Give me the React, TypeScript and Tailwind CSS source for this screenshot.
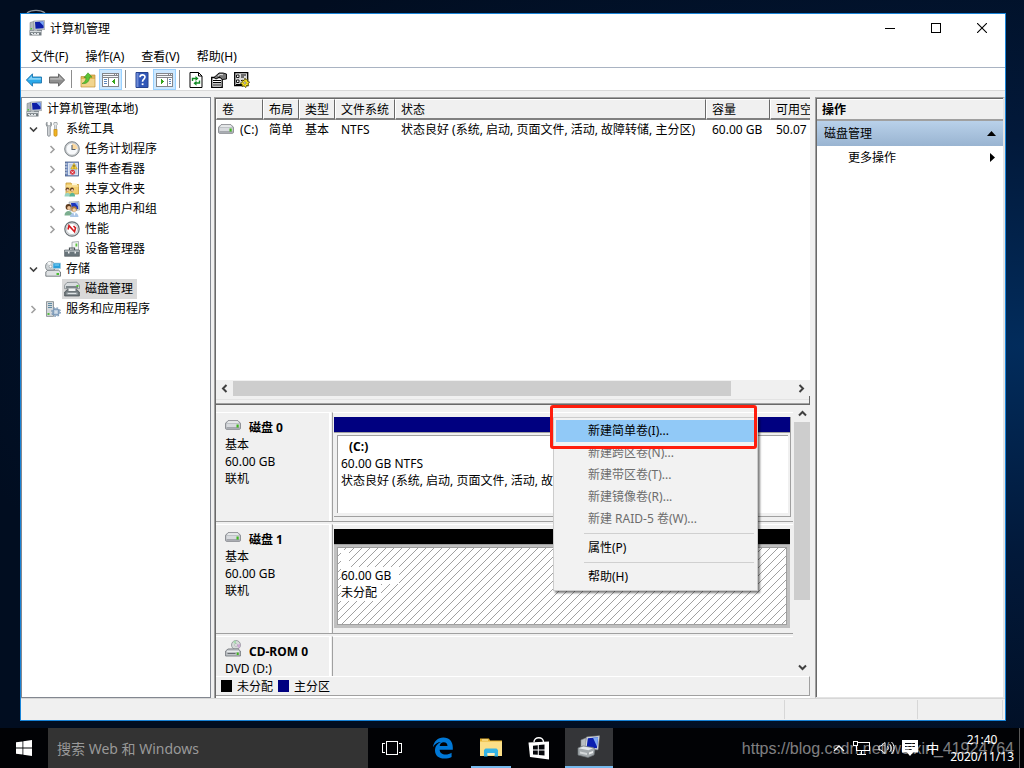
import React from "react";

const Svg = ({
  children,
  size = 16,
  className = "",
}: {
  children: React.ReactNode;
  size?: number;
  className?: string;
}) => (
  <svg
    width={size}
    height={size}
    viewBox="0 0 16 16"
    className={`shrink-0 ${className}`}
    aria-hidden="true"
  >
    {children}
  </svg>
);

const ComputerIcon = ({ size = 16 }: { size?: number }) => (
  <Svg size={size}>
    <path d="M1 2.500 4.500 1.500V11H1z" fill="#b4babe" stroke="#6f777c" strokeWidth=".5" />
    <path d="M4.500 1 15.500.5 15.800 9.500 5.500 10z" fill="#d0d4d8" stroke="#7d868c" strokeWidth=".5" />
    <path d="M6 2l8.400-.4.300 6.600-8.200.5z" fill="#0c1ea8" />
    <path d="M10.500 1.800l3.900-.2.200 4.400z" fill="#7aa9f8" />
    <path d="M8 9.800h5V11H8z" fill="#8c9499" />
    <path d="M.5 10.500h12v5H.5z" fill="#727b80" />
    <path d="M1 10.900h11v1.300H1z" fill="#d8dddf" />
    <path d="M2 13h2v1H2zm3 0h2v1H5zm3 0h2v1H8zM3 14.300h7v.7H3z" fill="#e6eaec" />
    <path d="M1.600 8h1.400v1.500H1.600z" fill="#52c836" />
  </Svg>
);

const ManagementIcon = () => (
  <svg width="24" height="24" viewBox="0 0 24 24" className="shrink-0" aria-hidden="true">
    <path d="m4 5 5-2v11l-5 2z" fill="#b9bec2" stroke="#878d91" strokeWidth=".6" />
    <path d="m9.500 2 13-1.200-1.500 14-13-1z" fill="#dde1e4" stroke="#8b9196" strokeWidth=".6" />
    <path d="m10.800 3.200 10.300-1-1.200 11-10.300-.8z" fill="#0a1fb0" />
    <path d="m16 2.700 5.100-.5-1 9.500z" fill="#7da8f2" />
    <path d="m1 13 5-2 10 1.500 2 1.500-1 6-6 2.500L1 20z" fill="#a3a9ad" stroke="#6e757a" strokeWidth=".7" />
    <path d="m1.500 13.200 5-1.600 9.500 1.600-4.500 2z" fill="#e5e8ea" />
    <path d="m3 16.500 7 1.500v2l-7-1.500z" fill="#d3d7da" />
    <path d="m12 17.500 4-1.500v2l-4 1.500z" fill="#eceeef" />
  </svg>
);

const ToolsIcon = () => (
  <Svg>
    <path
      d="M2 1.2C.8 2.6 1 5 2.6 6v8.2c0 1.4 2.6 1.4 2.6 0V6C6.8 5 7 2.6 5.800 1.200V4L4.500 4.800H3.300L2 4z"
      fill="#d9dcde"
      stroke="#777f84"
      strokeWidth=".8"
    />
    <path d="M9 1.500h3l.3 2-.9 1v4H9.600v-4l-.9-1z" fill="#e8eaeb" stroke="#8d9498" strokeWidth=".7" />
    <path d="M8.900 8.500h3.200v5.500c0 1.800-3.200 1.800-3.200 0z" fill="#f0b323" stroke="#b77d0b" strokeWidth=".6" />
  </Svg>
);

const ClockIcon = () => (
  <Svg>
    <circle cx="8" cy="8" r="7.300" fill="#c9ccce" stroke="#7d8489" strokeWidth="1" />
    <circle cx="8" cy="8" r="5.600" fill="#f7f9fb" />
    <path d="M8 2.400A5.600 5.600 0 0 1 13.600 8H8z" fill="#fbd9a0" />
    <path d="M8 4v4.500h3.500" fill="none" stroke="#59636d" strokeWidth="1.100" />
  </Svg>
);

const EventIcon = () => (
  <Svg>
    <rect x="1.500" y="1" width="13" height="14" fill="#6f89bd" stroke="#4c618c" strokeWidth=".8" />
    <rect x="4" y="1.800" width="10" height="12.400" fill="#dfe7f4" />
    <path d="M5 4h8M5 6h8M5 8h8M5 10h8M5 12h8" stroke="#8da5d0" strokeWidth=".7" />
    <path d="M.8 3h2.500M.8 6h2.500M.8 9h2.500M.8 12h2.500" stroke="#e3e6ea" strokeWidth="1" />
    <path d="M10 2.200 13.200 8H6.800z" fill="#ffd93b" stroke="#b89311" strokeWidth=".6" />
    <path d="M10 4v2.200M10 6.700v.7" stroke="#222" strokeWidth=".8" />
    <circle cx="8.500" cy="11.300" r="2.500" fill="#d8303a" />
    <path d="m7.500 10.300 2 2m0-2-2 2" stroke="#fff" strokeWidth=".8" />
  </Svg>
);

const SharedIcon = () => (
  <Svg>
    <path d="M2 4V2h5l1 1.500h6.500V13H2z" fill="#f3cf6f" stroke="#c59a35" strokeWidth=".8" />
    <path d="M8 2.200h5v2H8z" fill="#fff6d5" />
    <path d="M2 5h12.500" stroke="#fbe8b0" strokeWidth="1" />
    <circle cx="3.500" cy="8.500" r="1.900" fill="#6b4426" />
    <circle cx="8" cy="8.500" r="1.900" fill="#5a3820" />
    <circle cx="3.700" cy="9.200" r="1.200" fill="#f0c8a0" />
    <circle cx="8.300" cy="9.200" r="1.200" fill="#f0c8a0" />
    <path d="M.5 15.500c0-5 6-5 6 0z" fill="#9ad3c0" />
    <path d="M5.500 15.500c0-5 5.600-5 5.600 0z" fill="#5cb496" />
  </Svg>
);

const UsersIcon = () => (
  <Svg>
    <path d="M5 1 15 .5 15.500 9 6 10z" fill="#d6dade" stroke="#7d868c" strokeWidth=".5" />
    <path d="m7 2 7-.3.300 6.200L8 8.400z" fill="#1c36be" />
    <path d="m11 1.800 3-.1.200 4z" fill="#7ba6f5" />
    <circle cx="4.500" cy="6" r="2.900" fill="#5b3a1d" />
    <circle cx="5" cy="7" r="1.900" fill="#efc49a" />
    <path d="M.5 14.500c0-6 8-6 8 0z" fill="#7cae8f" />
    <circle cx="10" cy="8" r="2.800" fill="#ad7b3a" />
    <circle cx="10.200" cy="9" r="1.800" fill="#f7d1aa" />
    <path d="M6 16c0-6 8.500-6 8.500 0z" fill="#a9c5e6" />
    <path d="m9.500 12 1 3 1-3z" fill="#fff" />
  </Svg>
);

const PerformanceIcon = () => (
  <Svg>
    <circle cx="8" cy="8" r="7.200" fill="#e9ebec" stroke="#666d72" strokeWidth="1.200" />
    <circle cx="8" cy="8" r="5.600" fill="#fff" stroke="#a2a8ac" strokeWidth=".6" />
    <path d="M4 8.500 5 4.700l5.500 6 1-3.700-2-2" fill="none" stroke="#d2191e" strokeWidth="1.600" />
  </Svg>
);

const DeviceIcon = () => (
  <Svg>
    <path d="M8 1.200 14.500.5V9H8z" fill="#f3f4f5" stroke="#8b9195" strokeWidth=".7" />
    <path d="M11.500 2.500h1.800v3h-1.800z" fill="#5fc63f" />
    <path d="M5.500 9V7h5v2" fill="none" stroke="#4e565a" strokeWidth="1.200" />
    <path d="M.6 9h14.800v6.300H.6z" fill="#69757b" stroke="#4b5357" strokeWidth=".6" />
    <path d="M1 9.400h14v1.400H1z" fill="#b4bcc0" />
    <path d="M4 10.500h1.500v2H4zm6.500 0H12v2h-1.500z" fill="#edf0f1" />
  </Svg>
);

const StorageIcon = () => (
  <Svg>
    <circle cx="5.500" cy="5.500" r="5" fill="#cdd2d5" stroke="#747c80" strokeWidth=".8" />
    <path d="M5.500 5.500 2 2A5 5 0 0 1 6 .6z" fill="#f5f7f8" />
    <circle cx="5.500" cy="5.500" r="1.400" fill="#fff" stroke="#858c90" strokeWidth=".6" />
    <path d="M8 2h7.700v5.500H8z" fill="#2ba0db" stroke="#bcd3df" strokeWidth=".7" />
    <path d="M9.500 3.500h4.500v1H9.500z" fill="#8ad6f5" />
    <path d="m2.500 9.300 11-.2 2 1.900v4.200H.8V11z" fill="#dfe2e4" stroke="#5d6469" strokeWidth=".8" />
    <path d="M11.500 12H14v2h-2.500z" fill="#49be33" />
  </Svg>
);

const DiskManagementIcon = () => (
  <Svg>
    <path d="m3 1.500 10-.3 2.500 3v3.500H.6V4.200z" fill="#d8dcde" stroke="#737a7e" strokeWidth=".7" />
    <path d="M2 5h12v2.500H2z" fill="#7d8589" />
    <path d="M12.500 4h2v1.800h-2z" fill="#50c434" />
    <path d="m3.500 8.500h9l2.900 2.500v4H.6v-4z" fill="#6e767a" stroke="#484f53" strokeWidth=".7" />
    <path d="M4.500 7.500h7v2.500h-7z" fill="#eef0f1" />
    <path d="M2.500 11.500h11v2h-11z" fill="#a9b0b4" />
    <path d="M4 12h8v1H4z" fill="#dfe3e5" />
  </Svg>
);

const ServicesIcon = () => (
  <Svg>
    <path d="M1.500.6h7V15.400h-7z" fill="#d3d7da" stroke="#7c8488" strokeWidth=".8" />
    <path d="M3 2.500h4M3 4.500h4M3 6.500h4" stroke="#5f8ba4" strokeWidth="1" />
    <path d="M2.500 12h2v2h-2z" fill="#59bd43" />
    <circle cx="11" cy="11" r="3" fill="#d6e3ef" stroke="#7e9bb9" strokeWidth="1.600" />
    <circle cx="11" cy="11" r="4.300" fill="none" stroke="#7e9bb9" strokeWidth="1.200" strokeDasharray="1.700 1.678" />
    <circle cx="11" cy="11" r="1.300" fill="#fff" stroke="#7694b3" strokeWidth=".5" />
  </Svg>
);

const DriveIcon = () => (
  <svg width="16" height="10" viewBox="0 0 16 10" className="shrink-0" aria-hidden="true">
    <path d="M3 .7h10l2.400 2.500v5.200c0 .5-.4.900-.9.900h-13c-.5 0-.9-.4-.9-.9V3.200z" fill="#bfc3c7" stroke="#7d7f86" strokeWidth=".9" />
    <path d="M3.300 1.300h9.400L14 2.800H2z" fill="#f3f4f5" />
    <path d="M1.500 4h13v4h-13z" fill="#d8dade" />
    <path d="M1.500 7h13v1.600h-13z" fill="#a4a7ad" />
    <path d="M11.500 4.500h2.200v3h-2.200z" fill="#3fb51f" />
  </svg>
);

const CdDriveIcon = () => (
  <svg width="16" height="17" viewBox="0 0 16 17" className="shrink-0" aria-hidden="true">
    <circle cx="11" cy="5" r="4.500" fill="#d5dbd8" stroke="#8a8f93" strokeWidth=".8" />
    <path d="M11 5 8 1.800A4.500 4.500 0 0 1 11 .6z" fill="#a7d9ae" />
    <path d="m11 5 4.300-1A4.500 4.500 0 0 1 14 8.300z" fill="#cda8d2" />
    <circle cx="11" cy="5" r="1.300" fill="#fff" stroke="#8a8f93" strokeWidth=".5" />
    <path d="m3 9 10-.2 2.400 2.200v5H.6v-5z" fill="#bfc3c7" stroke="#777b80" strokeWidth=".9" />
    <path d="M2 11.300h12" stroke="#f3f4f5" strokeWidth="1" />
    <path d="M2.500 13.500h8" stroke="#666a6f" strokeWidth="1" />
    <path d="M11.700 12.500h2v2.500h-2z" fill="#3fb51f" />
  </svg>
);

const ArrowIcon = ({ forward = false }: { forward?: boolean }) => (
  <Svg>
    {forward ? (
      <>
        <path d="M15.600 8 9.500 1.800V5H.5v6h9v3.200z" fill="#8f8f8f" stroke="#5f5f5f" strokeWidth=".9" />
        <path d="m14 7.700-4-4v2.200H1.200v1.800z" fill="#b4b4b4" />
      </>
    ) : (
      <>
        <path d="M.4 8l6.100-6.200V5h9v6h-9v3.200z" fill="#2ba9ea" stroke="#1f74ad" strokeWidth=".9" />
        <path d="m2 7.700 4-4v2.200h8.800v1.800z" fill="#86d3f8" />
      </>
    )}
  </Svg>
);

const FolderUpIcon = () => (
  <Svg>
    <path d="M1 4.500h6L8 3h7V15H1z" fill="#e0b557" stroke="#bd913a" strokeWidth=".7" />
    <path d="M1.500 7h13v7.500h-13z" fill="#f2d58e" />
    <path
      d="M2 11.500C4.500 10.500 6 8.500 6 5.500H4L8 .8l4 4.400H9.500c0 4-2.500 7-7.500 6.300z"
      fill="#5cc437"
      stroke="#2f8617"
      strokeWidth=".5"
    />
  </Svg>
);

const PaneIcon = ({ flipped = false }: { flipped?: boolean }) => (
  <svg width="17" height="14" viewBox="0 0 17 14" shapeRendering="crispEdges" aria-hidden="true">
    <path d="M0 0h17v14H0z" fill="#84868a" />
    <path d="M1 1h11v1H1zM13 1h1v1h-1zM15 1h1v1h-1zM1 3h15v1H1z" fill="#f5f7fa" />
    <path d="M1 5h15v8H1z" fill="#fff" />
    <path d={flipped ? "M11 4h1v9h-1z" : "M6 4h1v9H6z"} fill="#84868a" />
    <path d={flipped ? "M13 6h2v1h-2zM13 8h2v1h-2zM13 10h2v1h-2z" : "M2 6h3v1H2zM2 8h3v1H2zM2 10h3v1H2z"} fill="#5b87bd" />
    <path d={flipped ? "M5 6h1v5H5zM6 7h1v3H6zM7 8h1v1H7z" : "M12 6h1v5h-1zM11 7h1v3h-1zM10 8h1v1h-1z"} fill="#33a51b" />
  </svg>
);

const HelpIcon = () => (
  <Svg>
    <path d="M2 .5h12v15H2z" fill="#3157b8" stroke="#26438f" />
    <path d="M2.500 1h2v14h-2z" fill="#6d8bd6" />
    <path d="M6 5.300c0-3.300 5-3.100 5-.3 0 2.100-2.500 2.100-2.500 4.800" fill="none" stroke="#fff" strokeWidth="1.600" />
    <path d="M7.700 11.300h1.800v1.800H7.700z" fill="#fff" />
  </Svg>
);

const RefreshIcon = () => (
  <Svg>
    <path d="M2 .5h8.500l3.500 3.500v11.500H2z" fill="#fff" stroke="#000" />
    <path d="M10.500.5V4H14" fill="none" stroke="#000" />
    <path d="M4.500 9V6.500h4" fill="none" stroke="#118a25" strokeWidth="1.400" />
    <path d="M7.500 4v5l3-2.500z" fill="#118a25" />
    <path d="M11.500 8.500V11h-4" fill="none" stroke="#118a25" strokeWidth="1.400" />
    <path d="M8.500 8.800v5l-3-2.500z" fill="#118a25" />
  </Svg>
);

const PropertiesIcon = () => (
  <Svg>
    <path d="M.7 5.500h10.500v10H.7z" fill="#fff" stroke="#000" strokeWidth="1.300" />
    <path d="M2 8.500h8M2 10.700h8M2 13h8" stroke="#000" strokeWidth="1.200" />
    <path d="M3 5.500 8 1h4l3.500 1v5l-4 .5L8.500 5 5 7z" fill="#777" stroke="#000" strokeWidth=".9" />
    <path d="m7 4 2-1.500 3 .2" stroke="#fff" strokeWidth=".8" fill="none" />
  </Svg>
);

const SettingsIcon = () => (
  <Svg>
    <path d="M.7.700h13v13H.7z" fill="#d9d9d9" stroke="#000" strokeWidth="1.300" />
    <path d="M2.500 3h2.500v2.500H2.500zm0 5h2.500v2.500H2.500z" fill="#fff" stroke="#000" strokeWidth=".9" />
    <path d="M7 3h5M7 5h3M7 8.500h3M2 12.500h6" stroke="#000" />
    <path d="m11 6 .8 2 2-.8-.3 2.100 2.300.9-1.900 1.300.8 2.200-2.200-.2-.8 2.200-1.500-1.900-2.200.8.300-2.200-2.100-1.200 2.200-.9-.4-2.200 2 .6z" fill="#ffea22" stroke="#463d00" strokeWidth=".7" />
    <circle cx="10.900" cy="11" r="1.200" fill="#fff" stroke="#463d00" strokeWidth=".6" />
  </Svg>
);

const Chevron = ({
  dir,
  color = "#404040",
  weight = 1.6,
}: {
  dir: "left" | "right" | "up" | "down";
  color?: string;
  weight?: number;
}) => {
  const d = {
    left: "M7.500 2 4 5.500 7.500 9",
    right: "M3.500 2 7 5.500 3.500 9",
    up: "M2 7.500 5.500 4 9 7.500",
    down: "M2 3.500 5.500 7 9 3.500",
  }[dir];
  return (
    <svg width="11" height="11" viewBox="0 0 11 11" className="shrink-0" aria-hidden="true">
      <path d={d} fill="none" stroke={color} strokeWidth={weight} />
    </svg>
  );
};

const menus = ["文件(F)", "操作(A)", "查看(V)", "帮助(H)"];

type Node = {
  label: string;
  icon: React.ReactNode;
  level: 0 | 1 | 2;
  state?: "open" | "closed";
  selected?: boolean;
};

const nodes: Node[] = [
  { label: "计算机管理(本地)", icon: <ComputerIcon />, level: 0 },
  { label: "系统工具", icon: <ToolsIcon />, level: 1, state: "open" },
  { label: "任务计划程序", icon: <ClockIcon />, level: 2, state: "closed" },
  { label: "事件查看器", icon: <EventIcon />, level: 2, state: "closed" },
  { label: "共享文件夹", icon: <SharedIcon />, level: 2, state: "closed" },
  { label: "本地用户和组", icon: <UsersIcon />, level: 2, state: "closed" },
  { label: "性能", icon: <PerformanceIcon />, level: 2, state: "closed" },
  { label: "设备管理器", icon: <DeviceIcon />, level: 2 },
  { label: "存储", icon: <StorageIcon />, level: 1, state: "open" },
  { label: "磁盘管理", icon: <DiskManagementIcon />, level: 2, selected: true },
  { label: "服务和应用程序", icon: <ServicesIcon />, level: 1, state: "closed" },
];

const indent = { 0: "pl-[2px]", 1: "pl-[4px]", 2: "pl-[23px]" };

const Tree = () => (
  <nav aria-label="控制台树" className="w-[190px] shrink-0 border border-[#828790] bg-white pt-px">
    <ul>
      {nodes.map((n) => (
        <li key={n.label} className={`flex h-5 items-center ${indent[n.level]}`}>
          {n.level > 0 && (
            <span className="mr-[3px] flex w-[14px] justify-center">
              {n.state === "open" && <Chevron dir="down" />}
              {n.state === "closed" && <Chevron dir="right" color="#a0a0a0" />}
            </span>
          )}
          <button
            type="button"
            className={`flex h-5 items-center gap-[5px] pr-1 pl-[2px] leading-[16px] whitespace-nowrap ${n.selected ? "bg-[#d9d9d9]" : ""}`}
          >
            {n.icon}
            {n.label}
          </button>
        </li>
      ))}
    </ul>
  </nav>
);

const columns = [
  { name: "卷", width: "w-[47px]" },
  { name: "布局", width: "w-[36px]" },
  { name: "类型", width: "w-[36px]" },
  { name: "文件系统", width: "w-[60px]" },
  { name: "状态", width: "w-[311px]" },
  { name: "容量", width: "w-[64px]" },
  { name: "可用空间", width: "w-[70px]" },
];

const cells = [
  "简单",
  "基本",
  "NTFS",
  "状态良好 (系统, 启动, 页面文件, 活动, 故障转储, 主分区)",
  "60.00 GB",
  "50.07",
];

const VolumeList = () => (
  <div className="flex min-h-0 flex-1 flex-col overflow-hidden">
    <div className="flex-1 overflow-hidden bg-white">
      <table className="w-[624px] table-fixed border-separate border-spacing-0 text-left">
        <thead>
          <tr>
            {columns.map((c) => (
              <th
                key={c.name}
                className={`${c.width} h-[21px] border-t border-r border-b-2 border-l border-t-white border-r-[#696969] border-b-[#808080] border-l-white bg-[#f0f0f0] p-0 pl-[5px] font-normal whitespace-nowrap`}
              >
                {c.name}
              </th>
            ))}
          </tr>
        </thead>
        <tbody>
          <tr>
            <td className="h-[18px] p-0 pl-[2px]">
              <span className="flex items-center gap-[6px] whitespace-nowrap">
                <DriveIcon />
                (C:)
              </span>
            </td>
            {cells.map((c) => (
              <td key={c} className="h-[18px] p-0 pl-[6px] whitespace-nowrap">
                {c}
              </td>
            ))}
          </tr>
        </tbody>
      </table>
    </div>
    <div className="flex h-[16px] shrink-0 items-center bg-[#f0f0f0]">
      <button type="button" aria-label="向左滚动" className="flex w-[17px] justify-center">
        <Chevron dir="left" weight={2} />
      </button>
      <div className="flex h-[15px] flex-1">
        <div className="h-full w-[89%] bg-[#cdcdcd]" />
      </div>
      <button type="button" aria-label="向右滚动" className="flex w-[17px] justify-center">
        <Chevron dir="right" weight={2} />
      </button>
    </div>
  </div>
);

const DiskLabel = ({ icon, name, lines }: { icon: React.ReactNode; name: string; lines: string[] }) => (
  <div className="w-[115px] shrink-0 border-t border-r-2 border-white pl-[9px] leading-[17px]">
    <div className="flex h-[23px] gap-2 font-bold">
      <span className="flex items-center">{icon}</span>
      <span className="self-end">{name}</span>
    </div>
    {lines.map((l) => (
      <div key={l}>{l}</div>
    ))}
  </div>
);

const Hatch = () => (
  <svg className="absolute inset-0 h-full w-full" aria-hidden="true" shapeRendering="crispEdges">
    <defs>
      <pattern id="hatch" width="8" height="8" patternUnits="userSpaceOnUse">
        <path
          d="M0 7h1v1H0zM1 6h1v1H1zM2 5h1v1H2zM3 4h1v1H3zM4 3h1v1H4zM5 2h1v1H5zM6 1h1v1H6zM7 0h1v1H7z"
          fill="#a0a0a0"
        />
      </pattern>
    </defs>
    <rect width="100%" height="100%" fill="url(#hatch)" />
  </svg>
);

const DiskGraph = () => (
  <div className="flex min-w-0 flex-1 flex-col overflow-hidden pt-[7px]">
    <section className="mb-[2px] flex h-[110px] shrink-0 border-b border-[#a0a0a0]">
      <DiskLabel icon={<DriveIcon />} name="磁盘 0" lines={["基本", "60.00 GB", "联机"]} />
      <div className="ml-px min-w-0 flex-1 border-t border-l border-t-white border-l-[#a0a0a0] pt-1 pr-[2px] pl-px">
        <div className="border-r border-b border-[#a0a0a0]">
          <div className="h-[15px] bg-[#000080]" />
          <div className="border-t border-[#a0a0a0] pt-[2px] pr-[2px] pb-[3px] pl-[3px]">
            <div className="h-[78px] overflow-hidden border-t border-l border-[#a0a0a0] bg-white pt-[2px] pl-[3px] leading-[17px] whitespace-nowrap">
              <div className="pl-2 font-bold">(C:)</div>
              <div>60.00 GB NTFS</div>
              <div>状态良好 (系统, 启动, 页面文件, 活动, 故障转储, 主分区)</div>
            </div>
          </div>
        </div>
      </div>
    </section>
    <section className="mb-[2px] flex h-[110px] shrink-0 border-b border-[#a0a0a0]">
      <DiskLabel icon={<DriveIcon />} name="磁盘 1" lines={["基本", "60.00 GB", "联机"]} />
      <div className="ml-px min-w-0 flex-1 border-t border-l border-t-white border-l-[#a0a0a0] pt-1 pr-[3px] pl-px">
        <div className="h-[15px] bg-black" />
        <div className="border-t border-[#a0a0a0] bg-[#c0c0c0] pt-[2px] pr-[3px] pb-[3px] pl-[3px]">
          <div className="relative h-[78px] overflow-hidden border border-[#a0a0a0] bg-white">
            <Hatch />
            <div className="relative flex flex-col items-start pt-[2px] pl-[3px] leading-[17px]">
              <span className="h-[17px] w-2 bg-white" />
              <span className="bg-white pr-2">60.00 GB</span>
              <span className="bg-white pr-1">未分配</span>
            </div>
          </div>
        </div>
      </div>
    </section>
    <section className="flex flex-1 overflow-hidden">
      <DiskLabel icon={<CdDriveIcon />} name="CD-ROM 0" lines={["DVD (D:)"]} />
      <div className="ml-px flex-1 border-t border-l border-t-white border-l-[#a0a0a0]" />
    </section>
  </div>
);

const contextItems = [
  { label: "新建简单卷(I)...", kind: "active" },
  { label: "新建跨区卷(N)...", kind: "disabled" },
  { label: "新建带区卷(T)...", kind: "disabled" },
  { label: "新建镜像卷(R)...", kind: "disabled" },
  { label: "新建 RAID-5 卷(W)...", kind: "disabled" },
  { label: "属性(P)", kind: "separated" },
  { label: "帮助(H)", kind: "separated" },
];

const itemStyle: Record<string, string> = {
  active: "bg-[#91c9f7] text-black",
  disabled: "text-[#6d6d6d]",
  separated: "text-black",
};

const ContextMenu = () => (
  <div className="absolute top-[12px] left-[337px] w-[205px]">
    <div
      role="menu"
      className="border border-[#cccccc] bg-[#f2f2f2] p-[2px] shadow-[2px_2px_2px_rgba(0,0,0,0.5)]"
    >
      {contextItems.map((i) => (
        <React.Fragment key={i.label}>
          {i.kind === "separated" && <div className="mt-[3px] mr-px mb-[3px] ml-[28px] h-px bg-[#d0d0d0]" />}
          <button
            type="button"
            role="menuitem"
            disabled={i.kind === "disabled"}
            className={`block h-[22px] w-full pb-px pl-[32px] text-left ${itemStyle[i.kind]}`}
          >
            {i.label}
          </button>
        </React.Fragment>
      ))}
    </div>
    <div className="pointer-events-none absolute -top-[12px] -left-[3px] h-[44px] w-[207px] rounded-[3px] border-[3px] border-[#ff1d0d]" />
  </div>
);

const Legend = () => (
  <div className="flex h-[20px] shrink-0 items-center border-t border-r border-b border-t-white border-r-[#a0a0a0] border-b-[#a0a0a0] pl-[5px]">
    <span className="mr-[5px] h-[12px] w-[11px] bg-black" />
    未分配
    <span className="mr-[5px] ml-[5px] h-[12px] w-[11px] bg-[#000080]" />
    主分区
  </div>
);

const Center = () => (
  <main className="ml-[3px] flex min-w-0 flex-1 flex-col border-t border-l border-[#a0a0a0]">
    <div className="flex flex-1 flex-col border-t border-l border-[#696969]">
      <VolumeList />
      <div className="h-[9px] shrink-0 border-r border-b border-[#696969] pt-[3px]">
        <div className="h-[5px] border-t border-b border-t-[#e3e3e3] border-b-[#a0a0a0]" />
      </div>
      <div className="relative flex h-[271px] shrink-0">
        <DiskGraph />
        <div className="ml-px flex w-4 shrink-0 flex-col">
          <button type="button" aria-label="向上滚动" className="flex h-[17px] items-center justify-center">
            <Chevron dir="up" weight={2} />
          </button>
          <div className="flex-1">
            <div className="h-[75%] bg-[#cdcdcd]" />
          </div>
          <button type="button" aria-label="向下滚动" className="flex h-[17px] items-center justify-center">
            <Chevron dir="down" weight={2} />
          </button>
        </div>
        <ContextMenu />
      </div>
      <Legend />
      <div className="h-[2px] bg-white" />
    </div>
  </main>
);

const Actions = () => (
  <aside className="ml-[5px] w-[190px] shrink-0 border-t border-r-2 border-b border-l border-t-[#a0a0a0] border-r-[#e3e3e3] border-b-[#e3e3e3] border-l-[#a0a0a0]">
    <div className="h-full border-t border-l border-[#696969] bg-white">
      <h2 className="flex h-[22px] items-center border-t border-b-2 border-t-white border-b-[#a0a0a0] bg-[#f0f0f0] pl-[5px] font-bold">
        操作
      </h2>
      <button
        type="button"
        className="flex h-[25px] w-full items-center justify-between bg-linear-to-b from-[#b9d1ea] to-[#99b4d1] pr-[7px] pl-[7px]"
      >
        磁盘管理
        <svg width="9" height="5" viewBox="0 0 9 5" aria-hidden="true">
          <path d="M4.500 0 9 5H0z" />
        </svg>
      </button>
      <button type="button" className="flex h-[23px] w-full items-center justify-between pr-[8px] pl-[31px]">
        更多操作
        <svg width="5" height="9" viewBox="0 0 5 9" aria-hidden="true">
          <path d="M0 0 5 4.500 0 9z" />
        </svg>
      </button>
    </div>
  </aside>
);

const ToolButton = ({ label, on = false, children }: { label: string; on?: boolean; children: React.ReactNode }) => (
  <button
    type="button"
    aria-label={label}
    className={`flex h-[21px] w-[23px] items-center justify-center border ${on ? "border-[#99d1ff] bg-[#cce8ff]" : "border-transparent"}`}
  >
    {children}
  </button>
);

const Divider = () => <span className="mr-1 ml-[3px] h-[18px] w-px self-center bg-[#8d8d8d]" />;

const Window = () => (
  <div className="mr-[18px] ml-5 flex flex-1 flex-col border border-[#1883d7] bg-[#f0f0f0]">
    <header className="bg-white">
      <div className="flex h-[28px] items-center">
        <div className="flex flex-1 items-center gap-[5px] pl-2">
          <ComputerIcon />
          <h1>计算机管理</h1>
        </div>
        <button type="button" aria-label="最小化" className="flex h-[28px] w-[46px] items-center justify-center">
          <svg width="10" height="10" shapeRendering="crispEdges" aria-hidden="true">
            <path d="M0 5h10v1H0z" />
          </svg>
        </button>
        <button type="button" aria-label="最大化" className="flex h-[28px] w-[46px] items-center justify-center">
          <svg width="10" height="10" shapeRendering="crispEdges" aria-hidden="true">
            <path d="M.5.5h9v9h-9z" fill="none" stroke="#000" />
          </svg>
        </button>
        <button type="button" aria-label="关闭" className="flex h-[28px] w-[46px] items-center justify-center">
          <svg width="10" height="10" aria-hidden="true">
            <path d="m0 0 10 10m0-10-10 10" stroke="#000" strokeWidth="1.100" />
          </svg>
        </button>
      </div>
      <nav aria-label="菜单栏" className="flex h-[26px] items-center gap-[17px] border-b border-[#a9b3c2] pt-[3px] pl-[10px]">
        {menus.map((m) => (
          <button key={m} type="button">
            {m}
          </button>
        ))}
      </nav>
      <div role="toolbar" aria-label="工具栏" className="flex h-[23px] items-end border-b border-[#d9d9d9] pl-px">
        <ToolButton label="后退"><ArrowIcon /></ToolButton>
        <ToolButton label="前进"><ArrowIcon forward /></ToolButton>
        <Divider />
        <ToolButton label="上一级"><FolderUpIcon /></ToolButton>
        <ToolButton label="显示/隐藏控制台树" on><PaneIcon /></ToolButton>
        <Divider />
        <ToolButton label="帮助"><HelpIcon /></ToolButton>
        <ToolButton label="显示/隐藏操作窗格" on><PaneIcon flipped /></ToolButton>
        <Divider />
        <ToolButton label="刷新"><RefreshIcon /></ToolButton>
        <ToolButton label="属性"><PropertiesIcon /></ToolButton>
        <ToolButton label="设置"><SettingsIcon /></ToolButton>
      </div>
    </header>
    <div className="flex flex-1 pt-[6px]">
      <Tree />
      <Center />
      <Actions />
    </div>
    <footer className="flex h-[22px] shrink-0 border-t border-[#d7d7d7] pt-px pb-px">
      <div className="flex-1 border-r border-[#d7d7d7]" />
      <div className="w-[133px] border-r border-[#d7d7d7]" />
      <div className="mr-[2px] w-[85px] border-r border-[#d7d7d7]" />
    </footer>
  </div>
);

const EdgeIcon = () => (
  <svg width="22" height="22" viewBox="0 0 22 22" aria-hidden="true">
    <path
      d="M1 10.300C1.800 4.500 5.800.6 11.300.6c6.100 0 9.500 4.200 9.500 9.800v2.400H7.600c.2 3.200 2.700 4.700 5.900 4.700 2.400 0 4.300-.7 6.100-1.800v4.200c-2 1.100-4.500 1.600-7.200 1.600C6.700 21.500 3 18.300 3 13.400c0-4 2.400-7 6.200-8.400C5.700 5 2.700 7 1 10.300zM7.700 9h7.800c0-2.300-1.300-3.800-3.700-3.800S8 6.800 7.700 9z"
      fill="#0078d7"
    />
  </svg>
);

const ExplorerIcon = () => (
  <svg width="22" height="19" viewBox="0 0 22 19" aria-hidden="true">
    <path d="M0 2.500V.5h9l1 2h12V18H0z" fill="#e8b12c" />
    <path d="M0 3.500h22V18H0z" fill="#fbdf88" />
    <path d="M2 1.500h6v1H2z" fill="#fff2c2" />
    <path d="M4 18.500V12l1.500-1.500h11L18 12v6.500h-3.500V15h-7v3.500z" fill="#35b4e6" />
    <path d="M7.500 15h7v2h-7z" fill="#f6edc8" />
  </svg>
);

const StoreIcon = () => (
  <svg width="22" height="24" viewBox="0 0 22 24" aria-hidden="true">
    <path d="M6 6C6 .5 15.500 0 15.500 6" fill="none" stroke="#fff" strokeWidth="1.400" />
    <path d="m.5 6.500 20.500-1v18L2 21z" fill="#fff" />
    <path d="m5 9.700 4.800-.5v4.300H5zM10.800 9l5.700-.5v5h-5.700zM5 14.500h4.800v4.300L5 18.400zM10.800 14.500h5.700v4.900l-5.700-.5z" fill="#05070b" />
  </svg>
);

const Taskbar = () => (
  <div className="flex h-10 items-center bg-[#010205] text-white">
    <button type="button" aria-label="开始" className="flex h-full w-12 items-center justify-center">
      <svg width="16" height="16" viewBox="0 0 16 16" aria-hidden="true">
        <path d="M0 2.300 6.500 1.400v6.100H0zM7.300 1.200 16 0v7.500H7.300zM0 8.400h6.500v6.200L0 13.700zM7.300 8.400H16V16l-8.700-1.200z" fill="#fff" />
      </svg>
    </button>
    <input
      type="text"
      aria-label="搜索"
      placeholder="搜索 Web 和 Windows"
      className="h-full w-[320px] bg-[#333333] pl-[9px] text-[14px] text-white placeholder-[#999999] outline-none"
    />
    <button type="button" aria-label="任务视图" className="flex h-full w-12 items-center justify-center">
      <svg width="20" height="14" shapeRendering="crispEdges" aria-hidden="true">
        <path d="M4.500.5h11v13h-11zM3 2.500H.5v9H3M17 2.500h2.500v9H17" fill="none" stroke="#fff" />
      </svg>
    </button>
    <button type="button" aria-label="Microsoft Edge" className="ml-[3px] flex h-full w-12 items-center justify-center">
      <EdgeIcon />
    </button>
    <button
      type="button"
      aria-label="文件资源管理器"
      className="mx-1 flex h-full w-10 items-center justify-center border-b-2 border-[#76b9ed] pt-px"
    >
      <ExplorerIcon />
    </button>
    <button type="button" aria-label="应用商店" className="flex h-full w-12 items-center justify-center">
      <StoreIcon />
    </button>
    <button
      type="button"
      aria-label="计算机管理"
      className="ml-[2px] flex h-full w-12 items-center justify-center border-b-2 border-[#76b9ed] bg-[#343538]"
    >
      <ManagementIcon />
    </button>
    <div className="flex h-full flex-1 items-center justify-end">
      <svg width="12" height="7" className="mr-2" aria-hidden="true">
        <path d="m1 6 5-5 5 5" fill="none" stroke="#fff" strokeWidth="1.300" />
      </svg>
      <svg width="17" height="14" className="mr-2" shapeRendering="crispEdges" aria-hidden="true">
        <path d="M4 1.500h12.500v8H3.500V5M.5.5h4v4h-4zM8.500 10v3M4 13.500h9" fill="none" stroke="#fff" />
      </svg>
      <svg width="17" height="14" className="mr-[7px]" viewBox="0 0 17 14" aria-hidden="true">
        <path d="M1 5h2l4-3.500v11L3 9H1z" fill="none" stroke="#fff" />
        <path d="M9.500 5c1 1 1 3 0 4M11.500 3c2.200 2 2.200 6 0 8M13.500 1c3.300 3 3.300 9 0 12" fill="none" stroke="#fff" />
      </svg>
      <svg width="16" height="16" className="mr-2" viewBox="0 0 16 16" aria-hidden="true">
        <path d="M0 0h16v12.500h-5L8 16l-3-3.500H0z" fill="#fff" />
        <path d="M3 3.500h10M3 6.500h10M3 9.500h7" stroke="#05070b" />
      </svg>
      <span className="text-[13px]">中</span>
      <div className="mr-[5px] ml-[11px] flex flex-col items-center text-[12px] leading-[17px]">
        <span>21:40</span>
        <span>2020/11/13</span>
      </div>
      <span className="mr-1 h-full w-px bg-[#5a5a5a]" />
    </div>
  </div>
);

export default function App() {
  return (
    <div className="relative flex min-h-screen flex-col bg-[radial-gradient(ellipse_at_100%_45%,#022c5c_0%,#02193a_35%,#010d20_75%)] font-['Noto_Sans','Noto_Sans_CJK_SC',sans-serif] text-[12px] leading-[17px] text-black">
      <div className="flex h-[13px] items-end pl-[26px]">
        <svg width="20" height="4" aria-hidden="true">
          <path d="M1 4C5 .5 15 .5 19 4" fill="none" stroke="#8d949c" strokeWidth="1.300" />
        </svg>
      </div>
      <Window />
      <div className="h-[7px]" />
      <Taskbar />
      <div className="pointer-events-none absolute right-[10px] bottom-[9px] font-['Liberation_Sans',sans-serif] text-[16px] leading-[20px] text-white/50">
        https://blog.csdn.net/weixin_41924764
      </div>
    </div>
  );
}
